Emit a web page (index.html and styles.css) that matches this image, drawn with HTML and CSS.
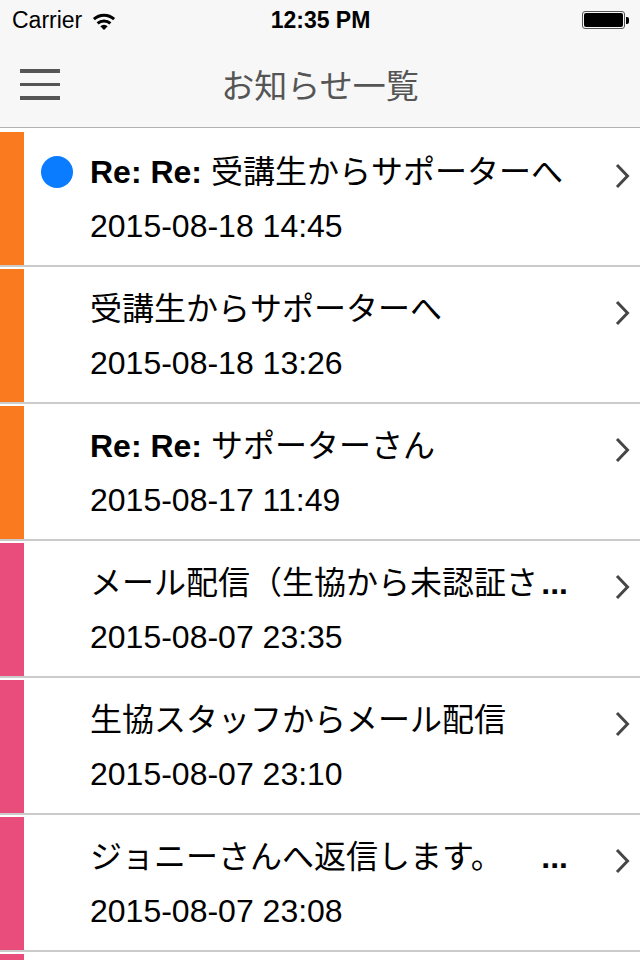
FILE: index.html
```html
<!DOCTYPE html>
<html>
	<head>
		<meta charset="UTF-8">
		<title>お知らせ一覧</title>
		<link rel="stylesheet" href="styles.css">
	</head>
	<body>
		<div class="statusBar">
			<div class="carrier">
				Carrier
				<svg class="wifi" width="24" height="18" viewBox="0 0 24 18">
					<path d="M1.9 7.1 A15 15 0 0 1 22.1 7.1" fill="none" stroke="#000" stroke-width="3"/>
					<path d="M5.6 11.4 A9.5 9.5 0 0 1 18.4 11.4" fill="none" stroke="#000" stroke-width="3"/>
					<path d="M12 18 L8.3 14.3 A5.2 5.2 0 0 1 15.7 14.3 Z" fill="#000"/>
				</svg>
			</div>
			<div class="clock">12:35 PM</div>
			<div class="battery">
				<span class="cell"><span class="level"></span></span>
				<span class="nub"></span>
			</div>
		</div>
		<div class="navBar">
			<div class="menuBtn">
				<span></span>
				<span></span>
				<span></span>
			</div>
			<h1 class="navTitle">お知らせ一覧</h1>
		</div>
		<ul class="list">
			<li class="item">
				<span class="bar orange"></span>
				<div class="body">
					<div class="text">
						<p class="title"><span class="dot"></span><b>Re: Re:</b>&nbsp;受講生からサポーターへ</p>
						<p class="date">2015-08-18 14:45</p>
					</div>
					<svg class="chev" width="15" height="26" viewBox="0 0 15 26"><polyline points="2,2 12.5,13 2,24" fill="none" stroke="#464646" stroke-width="3"/></svg>
				</div>
			</li>
			<li class="item">
				<span class="bar orange"></span>
				<div class="body">
					<div class="text">
						<p class="title">受講生からサポーターへ</p>
						<p class="date">2015-08-18 13:26</p>
					</div>
					<svg class="chev" width="15" height="26" viewBox="0 0 15 26"><polyline points="2,2 12.5,13 2,24" fill="none" stroke="#464646" stroke-width="3"/></svg>
				</div>
			</li>
			<li class="item">
				<span class="bar orange"></span>
				<div class="body">
					<div class="text">
						<p class="title"><b>Re: Re:</b>&nbsp;サポーターさん</p>
						<p class="date">2015-08-17 11:49</p>
					</div>
					<svg class="chev" width="15" height="26" viewBox="0 0 15 26"><polyline points="2,2 12.5,13 2,24" fill="none" stroke="#464646" stroke-width="3"/></svg>
				</div>
			</li>
			<li class="item">
				<span class="bar pink"></span>
				<div class="body">
					<div class="text">
						<p class="title">メール配信（生協から未認証さ<b class="more">...</b></p>
						<p class="date">2015-08-07 23:35</p>
					</div>
					<svg class="chev" width="15" height="26" viewBox="0 0 15 26"><polyline points="2,2 12.5,13 2,24" fill="none" stroke="#464646" stroke-width="3"/></svg>
				</div>
			</li>
			<li class="item">
				<span class="bar pink"></span>
				<div class="body">
					<div class="text">
						<p class="title">生協スタッフからメール配信</p>
						<p class="date">2015-08-07 23:10</p>
					</div>
					<svg class="chev" width="15" height="26" viewBox="0 0 15 26"><polyline points="2,2 12.5,13 2,24" fill="none" stroke="#464646" stroke-width="3"/></svg>
				</div>
			</li>
			<li class="item">
				<span class="bar pink"></span>
				<div class="body">
					<div class="text">
						<p class="title">ジョニーさんへ返信します。<b class="more">...</b></p>
						<p class="date">2015-08-07 23:08</p>
					</div>
					<svg class="chev" width="15" height="26" viewBox="0 0 15 26"><polyline points="2,2 12.5,13 2,24" fill="none" stroke="#464646" stroke-width="3"/></svg>
				</div>
			</li>
			<li class="item">
				<span class="bar pink"></span>
				<div class="body"></div>
			</li>
		</ul>
	</body>
</html>
```
FILE: styles.css
```css
*{
	margin:0;
	padding:0;
}
html,body{
	width:640px;
	height:960px;
	overflow:hidden;
	background:#fff;
}
body{
	font-family:"Liberation Sans","Noto Sans CJK JP",sans-serif;
	color:#000;
}
.statusBar{
	display:grid;
	grid-template-columns:1fr auto 1fr;
	align-items:center;
	height:40px;
	padding:0 11px 0 12px;
	background:#f7f7f7;
	font-size:23px;
}
.carrier{
	display:flex;
	align-items:center;
	gap:10px;
}
.wifi{
	display:block;
	margin-top:1px;
}
.clock{
	font-weight:bold;
}
.battery{
	display:flex;
	align-items:center;
	justify-content:flex-end;
	gap:1px;
}
.cell{
	display:block;
	width:43px;
	height:18px;
	box-sizing:border-box;
	border:1px solid #555;
	border-radius:3px;
	padding:1px;
}
.level{
	display:block;
	height:100%;
	background:#000;
	border-radius:2px;
}
.nub{
	display:block;
	width:3px;
	height:7px;
	background:#000;
	border-radius:0 2px 2px 0;
}
.navBar{
	position:relative;
	display:flex;
	align-items:center;
	justify-content:center;
	height:87px;
	background:#f7f7f7;
	border-bottom:1px solid #b2b2b2;
}
.menuBtn{
	position:absolute;
	left:20px;
	top:29px;
	display:flex;
	flex-direction:column;
	gap:10px;
	width:40px;
}
.menuBtn span{
	display:block;
	height:3.5px;
	background:#555;
}
.navTitle{
	font-size:33px;
	font-weight:normal;
	color:#555;
}
.list{
	list-style:none;
	padding-top:2px;
}
.item{
	display:flex;
	padding-top:2px;
	border-bottom:2px solid #cbcbcb;
}
.bar{
	display:block;
	width:24px;
	flex:none;
}
.orange{
	background:#f97a1f;
}
.pink{
	background:#e84d7b;
}
.body{
	flex:1;
	display:flex;
	align-items:center;
	height:133px;
	padding-left:66px;
}
.text{
	flex:1;
	display:flex;
	flex-direction:column;
	gap:18px;
}
.title,.date{
	height:36px;
	line-height:36px;
	font-size:32px;
	white-space:nowrap;
}
.title{
	display:flex;
	align-items:center;
	width:478px;
}
.dot{
	display:block;
	flex:none;
	width:32px;
	height:32px;
	margin-left:-49px;
	margin-right:17px;
	border-radius:50%;
	background:#0a7cff;
}
.more{
	margin-left:auto;
}
.chev{
	display:block;
	align-self:flex-start;
	margin-top:31px;
	margin-right:10px;
	flex:none;
}
```
